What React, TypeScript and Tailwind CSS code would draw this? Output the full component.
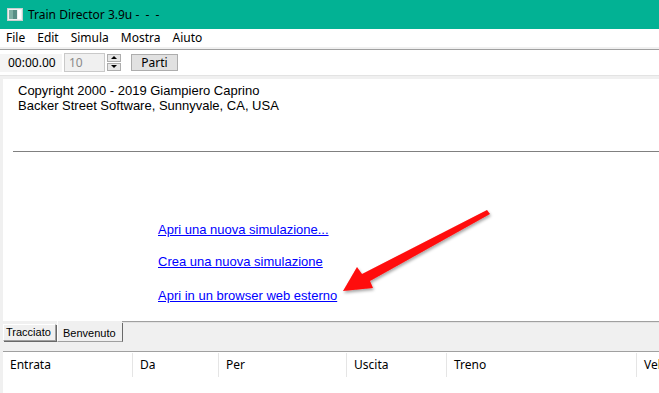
import React from "react";

const ui = { fontFamily: '"Segoe UI", "Noto Sans", "Liberation Sans", sans-serif' };
const arial = { fontFamily: '"Liberation Sans", Arial, sans-serif' };
const tab = { fontFamily: 'Tahoma, "Liberation Sans", sans-serif' };

const menus = ["File", "Edit", "Simula", "Mostra", "Aiuto"];

const links = [
  { text: "Apri una nuova simulazione...", mt: "mt-0" },
  { text: "Crea una nuova simulazione", mt: "mt-[17px]" },
  { text: "Apri in un browser web esterno", mt: "mt-[19px]" },
];

const columns = [
  { name: "Entrata", w: "w-[130px]" },
  { name: "Da", w: "w-[86px]" },
  { name: "Per", w: "w-[128px]" },
  { name: "Uscita", w: "w-[100px]" },
  { name: "Treno", w: "w-[190px]" },
  { name: "Velocità", w: "w-[80px]" },
];

const AppIcon = () => (
  <svg width="16" height="13" viewBox="0 0 16 13">
    <rect x="0.5" y="0.5" width="15" height="12" fill="#eef0f0" stroke="#c8d0d0" />
    <rect x="2" y="2" width="8" height="9" fill="#5a8f86" />
    <rect x="2" y="2" width="4" height="9" fill="#7fb0a4" />
    <rect x="11" y="2" width="3" height="9" fill="#ffffff" />
  </svg>
);

const Arrow = () => (
  <svg
    className="absolute left-0 top-0 pointer-events-none"
    width="659"
    height="393"
    viewBox="0 0 659 393"
  >
    <defs>
      <filter id="sh" x="-10%" y="-10%" width="120%" height="130%">
        <feDropShadow dx="1" dy="2" stdDeviation="1.5" floodColor="#000" floodOpacity="0.35" />
      </filter>
    </defs>
    <polygon
      points="343,291 357,267 362,274 487,210 490,214 370,281 373,288"
      fill="#ff0a0a"
      filter="url(#sh)"
    />
  </svg>
);

export default function App() {
  return (
    <div className="relative w-[659px] h-[393px] overflow-hidden bg-[#f0f0f0] text-black">
      {/* title bar */}
      <div className="h-[29px] bg-[#02b294] flex items-center pl-[7px] gap-[5px]" style={ui}>
        <AppIcon />
        <span className="text-[12px] text-black">Train Director 3.9u - &nbsp;- &nbsp;-</span>
      </div>

      {/* menu */}
      <div className="h-[18px] bg-white flex items-center text-[12px] pl-[6px]" style={ui}>
        {menus.map((m) => (
          <span key={m} className="mr-[12px]">
            {m}
          </span>
        ))}
      </div>
      <div className="h-[2px] bg-[#f0f0f0]" />
      <div className="h-px bg-[#a0a0a0]" />

      {/* toolbar */}
      <div className="h-[25px] bg-white flex items-center" style={ui}>
        <div className="w-[62px] h-[18px] bg-[#f4f4f4] flex items-center pl-[8px] text-[12px]">
          00:00.00
        </div>
        <div className="ml-[2px] w-[41px] h-[19px] border border-[#c9c9c9] bg-[#f0f0f0] flex items-center pl-[4px] text-[12px] text-[#8a8a8a]">
          10
        </div>
        <div className="ml-[2px] w-[14px] h-[18px] flex flex-col gap-[1px]">
          <div className="h-[8px] border border-[#adadad] bg-[#e6e6e6] flex items-center justify-center">
            <svg width="6" height="4" viewBox="0 0 6 4">
              <polygon points="0,3 3,0 6,3" fill="#000" />
            </svg>
          </div>
          <div className="h-[8px] border border-[#adadad] bg-[#e6e6e6] flex items-center justify-center">
            <svg width="6" height="4" viewBox="0 0 6 4">
              <polygon points="0,0 6,0 3,3" fill="#000" />
            </svg>
          </div>
        </div>
        <div className="ml-[10px] w-[47px] h-[17px] border border-[#adadad] bg-[#e1e1e1] flex items-center justify-center text-[12px]">
          Parti
        </div>
      </div>
      <div className="h-px bg-[#e3e3e3]" />

      {/* main panel */}
      <div className="pl-[3px] pt-[3px]">
        <div className="h-[242px] bg-white flex flex-col" style={arial}>
          <div className="pl-[15px] pt-[4px] text-[13px] leading-[15px]">
            <div>Copyright 2000 - 2019 Giampiero Caprino</div>
            <div>Backer Street Software, Sunnyvale, CA, USA</div>
          </div>
          <div className="ml-[10px] mt-[38px] h-px bg-[#808080]" />
          <div className="pl-[155px] pt-[70px] flex flex-col text-[13px] leading-[15px]">
            {links.map((l) => (
              <a key={l.text} className={`${l.mt} text-[#0000ff] underline w-fit`}>
                {l.text}
              </a>
            ))}
          </div>
        </div>
      </div>

      {/* tabs */}
      <div className="relative h-[22px] flex items-start" style={tab}>
        <div className="absolute left-[122px] right-0 top-0 h-px bg-[#a0a0a0]" />
        <div className="absolute left-[122px] right-0 top-px h-px bg-[#e3e3e3]" />
        <div className="ml-[3px] mt-[3px] w-[53px] h-[17px] bg-[#f0f0f0] border-l border-t border-white border-r border-b border-r-[#a0a0a0] border-b-[#a0a0a0] text-[11px] leading-[14px] pl-[2px] shadow-[1px_1px_0_#696969]">
          Tracciato
        </div>
        <div className="ml-px w-[66px] h-[21px] bg-[#f0f0f0] border-l border-white border-r border-r-[#696969] border-b border-b-[#a0a0a0] text-[11px] pl-[5px] pt-[5px] leading-[14px]">
          Benvenuto
        </div>
      </div>
      <div className="h-[8px]" />
      <div className="h-px bg-[#a0a0a0] ml-[3px]" />

      {/* list */}
      <div className="pl-[3px] h-[50px]">
        <div className="h-full bg-white flex items-start pt-[1px]" style={ui}>
          {columns.map((c) => (
            <div
              key={c.name}
              className={`${c.w} shrink-0 h-[24px] border-r border-[#e5e5e5] flex items-center pl-[7px] text-[12px] whitespace-nowrap overflow-hidden`}
            >
              {c.name}
            </div>
          ))}
        </div>
      </div>

      <Arrow />
    </div>
  );
}
